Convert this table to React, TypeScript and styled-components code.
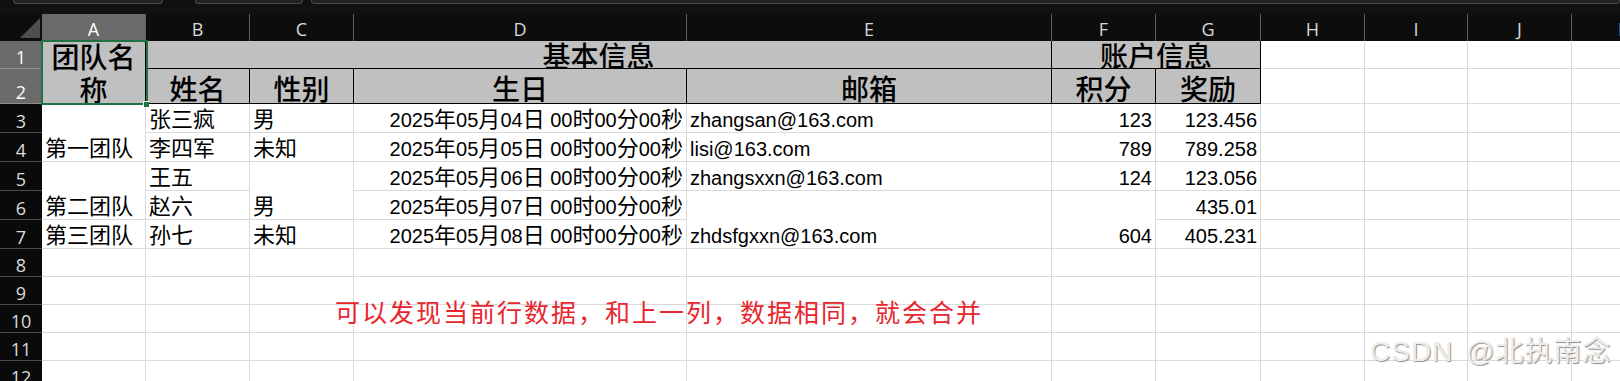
import React from "react";
import styled, { createGlobalStyle } from "styled-components";

const GlobalStyle = createGlobalStyle`
  html, body { margin: 0; padding: 0; background: #0b0b0b; }
  body { overflow: hidden; }
`;

const COL_WIDTHS = [104, 104, 104, 333, 365, 104, 105, 104, 103, 104, 104];
const ROW_HEIGHTS = [28, 35, 29, 29, 29, 29, 29, 28, 28, 28, 28, 28];
const LETTERS = ["A", "B", "C", "D", "E", "F", "G", "H", "I", "J", "K"];
const gc = (l: string) => LETTERS.indexOf(l) + 2;
const gr = (row: number) => row + 1;

type Entry = { row: number; col: string; span?: number; text: string; right?: boolean };

const ENTRIES: Entry[] = [
  { row: 3, col: "A", span: 2, text: "第一团队" },
  { row: 5, col: "A", span: 2, text: "第二团队" },
  { row: 7, col: "A", text: "第三团队" },
  { row: 3, col: "B", text: "张三疯" },
  { row: 4, col: "B", text: "李四军" },
  { row: 5, col: "B", text: "王五" },
  { row: 6, col: "B", text: "赵六" },
  { row: 7, col: "B", text: "孙七" },
  { row: 3, col: "C", text: "男" },
  { row: 4, col: "C", text: "未知" },
  { row: 5, col: "C", span: 2, text: "男" },
  { row: 7, col: "C", text: "未知" },
  { row: 3, col: "D", text: "2025年05月04日 00时00分00秒", right: true },
  { row: 4, col: "D", text: "2025年05月05日 00时00分00秒", right: true },
  { row: 5, col: "D", text: "2025年05月06日 00时00分00秒", right: true },
  { row: 6, col: "D", text: "2025年05月07日 00时00分00秒", right: true },
  { row: 7, col: "D", text: "2025年05月08日 00时00分00秒", right: true },
  { row: 3, col: "E", text: "zhangsan@163.com" },
  { row: 4, col: "E", text: "lisi@163.com" },
  { row: 5, col: "E", text: "zhangsxxn@163.com" },
  { row: 6, col: "E", span: 2, text: "zhdsfgxxn@163.com" },
  { row: 3, col: "F", text: "123", right: true },
  { row: 4, col: "F", text: "789", right: true },
  { row: 5, col: "F", text: "124", right: true },
  { row: 6, col: "F", span: 2, text: "604", right: true },
  { row: 3, col: "G", text: "123.456", right: true },
  { row: 4, col: "G", text: "789.258", right: true },
  { row: 5, col: "G", text: "123.056", right: true },
  { row: 6, col: "G", text: "435.01", right: true },
  { row: 7, col: "G", text: "405.231", right: true },
];

const Page = styled.div`
  position: relative;
  width: 1620px;
  height: 381px;
  overflow: hidden;
  background: #0b0b0b;
`;

const TopBar = styled.div`
  display: flex;
  align-items: flex-start;
  height: 14px;
  padding-left: 13px;
  background: #111111;
`;

const Pill = styled.div<{ $w?: number; $ml?: number }>`
  flex: ${(p) => (p.$w ? `0 0 ${p.$w}px` : "1 1 auto")};
  margin-left: ${(p) => p.$ml ?? 0}px;
  box-sizing: border-box;
  height: 4px;
  background: #222222;
  border: 1px solid #4c4c4c;
  border-top: none;
  border-radius: 0 0 6px 6px;
`;

const Sheet = styled.div`
  display: grid;
  width: max-content;
  grid-template-columns: 42px ${COL_WIDTHS.map((w) => `${w}px`).join(" ")};
  grid-template-rows: 27px ${ROW_HEIGHTS.map((h) => `${h}px`).join(" ")};
`;

const Corner = styled.div`
  grid-row: 1;
  grid-column: 1;
  display: flex;
  align-items: flex-end;
  justify-content: flex-end;
  padding: 0 2px 3px 0;
  background: #0d0d0d;
`;

const ColHead = styled.div<{ $c: number; $active?: boolean }>`
  grid-row: 1;
  grid-column: ${(p) => p.$c};
  box-sizing: border-box;
  display: flex;
  align-items: flex-end;
  justify-content: center;
  padding-bottom: 3px;
  background: ${(p) => (p.$active ? "#6a6a6a" : "#0d0d0d")};
  color: ${(p) => (p.$active ? "#ffffff" : "#d9d9d9")};
  border-right: 1px solid #5e5e5e;
  font-family: "Open Sans", "Liberation Sans", sans-serif;
  font-size: 18px;
  line-height: 18px;
`;

const RowHead = styled.div<{ $r: number; $active?: boolean }>`
  grid-row: ${(p) => p.$r};
  grid-column: 1;
  box-sizing: border-box;
  display: flex;
  align-items: flex-end;
  justify-content: center;
  padding-bottom: 2px;
  background: ${(p) => (p.$active ? "#6a6a6a" : "#0a0a0a")};
  color: ${(p) => (p.$active ? "#ffffff" : "#dcdcdc")};
  border-bottom: 1px solid ${(p) => (p.$active ? "#8c8c8c" : "#4a4a4a")};
  font-family: "Open Sans", "Liberation Sans", sans-serif;
  font-size: 18px;
  line-height: 18px;
`;

const Cell = styled.div<{ $r: number; $c: number; $rs?: number; $cs?: number }>`
  grid-row: ${(p) => p.$r} / span ${(p) => p.$rs ?? 1};
  grid-column: ${(p) => p.$c} / span ${(p) => p.$cs ?? 1};
  box-sizing: border-box;
  display: flex;
  align-items: flex-end;
  min-width: 0;
  border-right: 1px solid;
  border-bottom: 1px solid;
`;

const HeadCell = styled(Cell)<{ $lh: number; $pb?: number }>`
  justify-content: center;
  background: #c0c0c0;
  border-color: #000000;
  color: #000000;
  text-align: center;
  font-family: "Noto Sans CJK SC", sans-serif;
  font-size: 28px;
  font-weight: 500;
  line-height: ${(p) => p.$lh}px;
  padding-bottom: ${(p) => p.$pb ?? 0}px;
  overflow: hidden;
`;

const SelectedHead = styled(HeadCell)`
  position: relative;
  z-index: 2;
  overflow: visible;
  &::after {
    content: "";
    position: absolute;
    inset: -1px -3px -2px -1px;
    border: 2px solid #1f7244;
    pointer-events: none;
  }
  &::before {
    content: "";
    position: absolute;
    right: -4px;
    bottom: -4px;
    width: 5px;
    height: 5px;
    background: #1f7244;
    border-left: 1px solid #ffffff;
    border-top: 1px solid #ffffff;
    z-index: 1;
  }
`;

const DataCell = styled(Cell)<{ $right?: boolean }>`
  justify-content: ${(p) => (p.$right ? "flex-end" : "flex-start")};
  padding: 0 3px 2px 3px;
  background: #ffffff;
  border-color: #dadada;
  color: #000000;
  font-family: "Liberation Sans", "Noto Sans CJK SC", sans-serif;
  font-size: 20px;
  line-height: 20px;
  white-space: nowrap;
  overflow: hidden;
`;

const Label = styled.span<{ $drop?: number }>`
  display: block;
  width: 100%;
  margin-bottom: ${(p) => -(p.$drop ?? 3)}px;
`;

const DataLabel = styled.span`
  display: block;
`;

const Han = styled.span`
  font-family: "Noto Sans CJK SC", sans-serif;
  font-size: 22px;
`;

const Note = styled.div`
  position: absolute;
  left: 335px;
  top: 299px;
  z-index: 3;
  font-family: "Noto Sans CJK SC", sans-serif;
  font-size: 25px;
  line-height: 25px;
  letter-spacing: 2px;
  color: #e8262e;
  white-space: nowrap;
`;

const Watermark = styled.div`
  position: absolute;
  left: 1370px;
  top: 338px;
  z-index: 3;
  font-family: "Liberation Sans", "Noto Sans CJK SC", sans-serif;
  font-size: 28px;
  line-height: 28px;
  letter-spacing: 1px;
  word-spacing: 4px;
  color: #ededed;
  text-shadow: 1px 1px 1px #8e8e8e;
  white-space: nowrap;
`;

const mixed = (text: string) =>
  text.split(/([\u3000-\u9fff\uff00-\uffef]+)/).map((part, i) =>
    /[\u3000-\u9fff\uff00-\uffef]/.test(part) ? <Han key={i}>{part}</Han> : part
  );

const emptyCells = () => {
  const out: React.ReactNode[] = [];
  for (let row = 1; row <= 12; row++) {
    for (let ci = 0; ci < LETTERS.length; ci++) {
      const letter = LETTERS[ci];
      const inHeader = row <= 2 && ci < 7;
      const inData = row >= 3 && row <= 7 && ci < 7;
      if (inHeader || inData) continue;
      out.push(<DataCell key={`e-${row}-${letter}`} $r={gr(row)} $c={gc(letter)} />);
    }
  }
  return out;
};

export default function App() {
  return (
    <>
      <GlobalStyle />
      <Page>
        <TopBar>
          <Pill $w={150} />
          <Pill $w={108} $ml={32} />
          <Pill $ml={8} />
        </TopBar>
        <Sheet>
          <Corner>
            <svg width="20" height="20" viewBox="0 0 20 20">
              <polygon points="0,20 20,20 20,0" fill="#4f4f4f" />
            </svg>
          </Corner>
          {LETTERS.map((l) => (
            <ColHead key={l} $c={gc(l)} $active={l === "A"}>
              {l}
            </ColHead>
          ))}
          {ROW_HEIGHTS.map((_, i) => (
            <RowHead key={i} $r={gr(i + 1)} $active={i < 2}>
              {i + 1}
            </RowHead>
          ))}

          <SelectedHead $r={gr(1)} $c={gc("A")} $rs={2} $lh={33}>
            <Label>团队名称</Label>
          </SelectedHead>
          <HeadCell $r={gr(1)} $c={gc("B")} $cs={4} $lh={28}>
            <Label $drop={1}>基本信息</Label>
          </HeadCell>
          <HeadCell $r={gr(1)} $c={gc("F")} $cs={2} $lh={28}>
            <Label $drop={1}>账户信息</Label>
          </HeadCell>
          {["姓名", "性别", "生日", "邮箱", "积分", "奖励"].map((t, i) => (
            <HeadCell key={t} $r={gr(2)} $c={gc(LETTERS[i + 1])} $lh={33} $pb={1}>
              <Label>{t}</Label>
            </HeadCell>
          ))}

          {ENTRIES.map((e) => (
            <DataCell
              key={`${e.row}-${e.col}`}
              $r={gr(e.row)}
              $c={gc(e.col)}
              $rs={e.span}
              $right={e.right}
            >
              <DataLabel>{mixed(e.text)}</DataLabel>
            </DataCell>
          ))}
          {emptyCells()}
        </Sheet>
        <Note>可以发现当前行数据，和上一列，数据相同，就会合并</Note>
        <Watermark>CSDN @北执南念</Watermark>
      </Page>
    </>
  );
}
